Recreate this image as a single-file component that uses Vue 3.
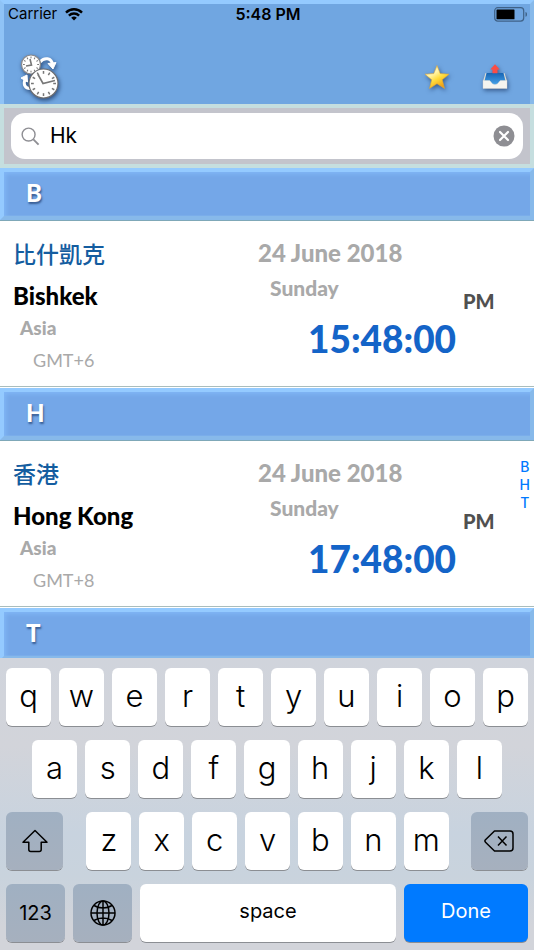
<script setup>
import { ref } from 'vue'

const query = ref('Hk')
const sections = [
  { letter: 'B', cities: [{ native: '比什凱克', name: 'Bishkek', region: 'Asia', zone: 'GMT+6', date: '24 June 2018', day: 'Sunday', time: '15:48:00', half: 'PM' }] },
  { letter: 'H', cities: [{ native: '香港', name: 'Hong Kong', region: 'Asia', zone: 'GMT+8', date: '24 June 2018', day: 'Sunday', time: '17:48:00', half: 'PM' }] },
  { letter: 'T', cities: [] }
]
const keys = ['qwertyuiop', 'asdfghjkl', 'zxcvbnm'].map((row) => row.split(''))
const ticks = Array.from({ length: 12 }, (_, i) => i * 30)

function press(key) {
  query.value += key
}
</script>

<template>
  <div class="app">
    <header class="header">
      <div class="status">
        <div class="carrier">
          <span>Carrier</span>
          <svg class="wifi" viewBox="0 0 18 13" aria-hidden="true">
            <path d="M1 4.6a11.4 11.4 0 0 1 16 0" />
            <path d="M3.9 7.6a7.3 7.3 0 0 1 10.2 0" />
            <path class="dot" d="M9 12.6 6.2 9.8a4 4 0 0 1 5.6 0z" />
          </svg>
        </div>
        <span class="clock">5:48 PM</span>
        <svg class="battery" viewBox="0 0 34 15" aria-hidden="true">
          <rect class="shell" x="0.7" y="0.7" width="29" height="13.4" rx="3" />
          <rect x="2.5" y="2.5" width="18" height="9.8" rx="0.6" />
          <path class="cap" d="M31.5 5c2 .4 2 4.4 0 4.800z" />
        </svg>
      </div>
      <nav class="toolbar">
        <button class="tool" type="button" aria-label="Convert time">
          <svg class="clocks" viewBox="0 0 44 50">
            <path class="curve" d="M20 10c4-5 12-4.500 12.500 3" />
            <path class="tip" d="m28 11.500 8-1-3 6.500z" />
            <path class="curve" d="M11 36.500c-6 .5-8-4-6-9" />
            <path class="tip" d="m1 26 6-3 .5 7z" />
            <circle class="face" cx="11" cy="12.500" r="9.500" />
            <g class="tick"><path v-for="a in ticks" :key="a" d="M11 4.500v1.800" :transform="`rotate(${a} 11 12.5)`" /></g>
            <path class="hand" d="m10 7 1.500 6-5.500 1" />
            <circle class="face large" cx="23.500" cy="31.500" r="14.500" />
            <g class="tick big"><path v-for="a in ticks" :key="a" d="M23.500 19v2.800" :transform="`rotate(${a} 23.5 31.5)`" /></g>
            <path class="hand" d="m18 22.500 5 9 12-3" />
          </svg>
        </button>
        <div class="actions">
          <button class="tool" type="button" aria-label="Favourites">
            <svg class="glyph" viewBox="0 0 26 26">
              <defs>
                <linearGradient id="gold" x1="0" y1="0" x2="0.6" y2="1">
                  <stop offset="0" stop-color="#ffe58a" />
                  <stop offset="0.4" stop-color="#fff6b0" />
                  <stop offset="0.65" stop-color="#ffdc3c" />
                  <stop offset="1" stop-color="#f09c12" />
                </linearGradient>
              </defs>
              <path d="m13 1.500 3.200 8.100 8.800.6-6.700 5.600 2.200 8.600-7.500-4.700-7.500 4.700 2.200-8.600L1 10.200l8.800-.6z" fill="url(#gold)" stroke="#dda637" stroke-width="0.6" stroke-linejoin="round" />
            </svg>
          </button>
          <button class="tool" type="button" aria-label="Export">
            <svg class="glyph" viewBox="0 0 26 26">
              <defs>
                <linearGradient id="tray" x1="0" y1="0" x2="0" y2="1">
                  <stop offset="0" stop-color="#1765b4" />
                  <stop offset="1" stop-color="#48a4ea" />
                </linearGradient>
              </defs>
              <path d="M3.500 9h19l2.500 8v6H1v-6z" fill="#dfddd4" />
              <path d="M4.500 9h17l2 8-5.500 4H8l-5.500-4z" fill="url(#tray)" />
              <path d="M1 16.500h6.500c1.200 0 2 4 5.500 4s4.300-4 5.500-4H25v8H1z" fill="#f5f4ef" stroke="#d8d6ce" stroke-width="0.4" />
              <path d="m13 .2 4.800 5.300h-2.300v3.700h-5V5.500H8.200z" fill="#fa4d45" />
            </svg>
          </button>
        </div>
      </nav>
    </header>

    <form class="search" role="search" @submit.prevent>
      <div class="field">
        <svg class="lens" viewBox="0 0 20 20" aria-hidden="true">
          <circle cx="8" cy="8" r="6.800" />
          <path d="m13 13 5.500 5.500" />
        </svg>
        <input v-model="query" type="text" aria-label="Search cities" />
        <button class="clear" type="button" aria-label="Clear" @click="query = ''">
          <svg viewBox="0 0 22 22">
            <circle cx="11" cy="11" r="10.500" />
            <path d="m7 7 8 8m0-8-8 8" />
          </svg>
        </button>
      </div>
    </form>

    <main class="list">
      <section v-for="s in sections" :key="s.letter" class="section">
        <h2 class="letter">{{ s.letter }}</h2>
        <article v-for="c in s.cities" :key="c.name" class="city">
          <div class="place">
            <p class="native" lang="zh-Hant">{{ c.native }}</p>
            <h3 class="name">{{ c.name }}</h3>
            <p class="region">{{ c.region }}</p>
            <p class="zone">{{ c.zone }}</p>
          </div>
          <div class="moment">
            <p class="date">{{ c.date }}</p>
            <p class="day">{{ c.day }}</p>
            <p class="time">{{ c.time }}</p>
          </div>
          <p class="half">{{ c.half }}</p>
        </article>
      </section>
    </main>

    <nav class="index" aria-label="Sections">
      <a v-for="s in sections" :key="s.letter" href="#">{{ s.letter }}</a>
    </nav>

    <div class="keyboard">
      <div class="row">
        <button v-for="k in keys[0]" :key="k" class="key" type="button" @click="press(k)">{{ k }}</button>
      </div>
      <div class="row middle">
        <button v-for="k in keys[1]" :key="k" class="key" type="button" @click="press(k)">{{ k }}</button>
      </div>
      <div class="row">
        <button class="key dark side" type="button" aria-label="Shift">
          <svg class="shift" viewBox="0 0 28 24"><path d="M14 1.500 2 13.200h5.800v7.300c0 1.200.8 2 2 2h8.400c1.200 0 2-.8 2-2v-7.300H26z" /></svg>
        </button>
        <div class="letters">
          <button v-for="k in keys[2]" :key="k" class="key" type="button" @click="press(k)">{{ k }}</button>
        </div>
        <button class="key dark side" type="button" aria-label="Delete" @click="query = query.slice(0, -1)">
          <svg class="erase" viewBox="0 0 30 22"><path d="M10.500 1H26a3 3 0 0 1 3 3v14a3 3 0 0 1-3 3H10.500L1.500 12.200a1.700 1.700 0 0 1 0-2.400zM14 6.500l8.500 9m0-9-8.500 9" /></svg>
        </button>
      </div>
      <div class="bottom">
        <button class="key dark word side" type="button">123</button>
        <button class="key dark side" type="button" aria-label="Next keyboard">
          <svg class="globe" viewBox="0 0 26 26">
            <circle cx="13" cy="13" r="12" />
            <ellipse cx="13" cy="13" rx="6" ry="12" />
            <path d="M13 1v24M1 13h24M4 5.500c5 3.300 13 3.300 18 0M4 20.500c5-3.300 13-3.300 18 0" />
          </svg>
        </button>
        <button class="key word" type="button" @click="press(' ')">space</button>
        <button class="key word done" type="button">Done</button>
      </div>
    </div>
  </div>
</template>

<style>
body {
  margin: 0;
}
</style>

<style scoped>
.app {
  position: relative;
  display: flex;
  flex-direction: column;
  min-height: 100vh;
  background: #fff;
  font-family: Lato, "Noto Sans CJK TC", sans-serif;
}
.app * {
  box-sizing: border-box;
}
p, h2, h3 {
  margin: 0;
}
button {
  margin: 0;
  padding: 0;
  border: 0;
  background: none;
  color: inherit;
  font: inherit;
}
svg {
  display: block;
}

.header {
  height: 104px;
  border: 4px solid #87b9ea;
  border-top-color: #94caff;
  border-left-color: #8fc3f6;
  border-bottom: 0;
  background: #70a6e1;
}
.status {
  display: grid;
  grid-template-columns: 1fr auto 1fr;
  align-items: center;
  height: 20px;
  padding: 0 2px 0 4px;
  color: #000;
  font: 15px/20px Inter, sans-serif;
}
.carrier {
  display: flex;
  align-items: center;
  gap: 8px;
}
.wifi {
  width: 18px;
  height: 13px;
  fill: none;
  stroke: #000;
  stroke-width: 2.4;
}
.wifi .dot {
  fill: #000;
  stroke: none;
}
.clock {
  font-size: 16px;
  font-weight: 600;
}
.battery {
  justify-self: end;
  width: 34px;
  height: 15px;
}
.shell {
  fill: none;
  stroke: #3f6288;
  stroke-width: 1.2;
}
.cap {
  fill: #3f6288;
}
.toolbar {
  display: flex;
  justify-content: space-between;
  align-items: center;
  padding: 28px 22px 0 16px;
}
.actions {
  display: flex;
  gap: 32px;
}
.clocks {
  width: 44px;
  height: 50px;
  filter: drop-shadow(1px 2px 2px rgba(0, 20, 60, 0.6));
}
.curve {
  fill: none;
  stroke: #fff;
  stroke-width: 3;
}
.tip {
  fill: #fff;
  stroke: #fff;
  stroke-width: 1;
}
.face {
  fill: #fff;
  stroke: #8a8a8c;
  stroke-width: 1.2;
}
.large {
  stroke: #6e6e70;
}
.tick,
.hand {
  fill: none;
  stroke: #777;
  stroke-width: 1;
}
.big {
  stroke-width: 1.5;
}
.hand {
  stroke-width: 1.6;
}
.glyph {
  width: 26px;
  height: 26px;
  filter: drop-shadow(1px 2px 2px rgba(0, 20, 60, 0.5));
}

.search {
  padding: 5px 7px;
  border: 4px solid #c5dedf;
  background: #c3c4cc;
}
.field {
  display: flex;
  align-items: center;
  gap: 10px;
  height: 46px;
  padding: 0 8px 0 10px;
  border-radius: 14px;
  background: #fff;
}
.lens {
  width: 19px;
  height: 19px;
  fill: none;
  stroke: #8e8e93;
  stroke-width: 1.5;
}
.lens path {
  stroke-width: 2;
}
.field input {
  flex: 1;
  min-width: 0;
  padding: 0;
  border: 0;
  outline: 0;
  background: none;
  color: #000;
  font: 21px/28px Inter, sans-serif;
}
.clear svg {
  width: 22px;
  height: 22px;
  fill: #8e8e93;
}
.clear path {
  stroke: #fff;
  stroke-width: 2.2;
  stroke-linecap: round;
}

.list {
  flex: 1;
}
.letter {
  height: 52px;
  padding: 0 22px;
  border: 4px solid #87b9ea;
  border-top-color: #94caff;
  border-left-color: #94caff;
  background: #74a7e8;
  box-shadow: inset 3px 3px 4px -1px #80b6f6, inset 0 -1px 0 #7aaeea, 0 1px 0 #7fa8b8;
  color: #fff;
  font-size: 24px;
  font-weight: 900;
  line-height: 42px;
  text-shadow: 1px 2px 2px rgba(30, 60, 110, 0.7);
}
.city {
  display: grid;
  grid-template-columns: minmax(0, 258fr) minmax(0, 205fr) minmax(0, 71fr);
  height: 167px;
  margin-bottom: 1px;
  padding-top: 16px;
  border-bottom: 1px solid #a9bdbd;
  white-space: nowrap;
}
.place {
  padding-left: 13px;
}
.native {
  color: #145da0;
  font-size: 23px;
  font-weight: 500;
  line-height: 36px;
}
.name {
  color: #000;
  font-size: 24px;
  font-weight: 900;
  line-height: 48px;
}
.region {
  padding-left: 7px;
  color: #a9a9a9;
  font-size: 19px;
  font-weight: 900;
  line-height: 16px;
}
.zone {
  padding-left: 20px;
  color: #a9a9a9;
  font-size: 18px;
  font-weight: 400;
  line-height: 48px;
}
.date {
  color: #a9a9a9;
  font-size: 24px;
  font-weight: 900;
  line-height: 34px;
}
.day {
  padding-left: 12px;
  color: #a9a9a9;
  font-size: 21px;
  font-weight: 900;
  line-height: 36px;
}
.time {
  padding-left: 50px;
  color: #1464c8;
  font-size: 37px;
  font-weight: 900;
  line-height: 66px;
}
.half {
  padding-top: 48px;
  color: #505050;
  font-size: 20px;
  font-weight: 900;
  line-height: 34px;
}

.index {
  position: absolute;
  top: 51%;
  right: 4px;
  display: flex;
  flex-direction: column;
  align-items: center;
  transform: translateY(-50%);
  font: 500 14px/18px Inter, sans-serif;
}
.index a {
  color: #007aff;
  text-decoration: none;
}

.keyboard {
  position: relative;
  display: flex;
  flex-direction: column;
  gap: 14px;
  margin-top: -2px;
  padding: 10px 6px 8px;
  background: linear-gradient(#d0d4dc 0%, #d2d4da 30%, #c8d3df 60%, #c9d3dd 75%, #d2d4da 92%);
  color: #000;
  font-family: Inter, sans-serif;
}
.row,
.letters {
  display: flex;
  gap: 8px;
}
.bottom {
  display: grid;
  grid-template-columns: 59fr 59fr 256fr 124fr;
  gap: 8px;
}
.middle {
  padding: 0 26px;
}
.letters {
  flex: 1;
  padding: 0 14px 0 15px;
}
.key {
  display: flex;
  flex: 1 1 0;
  justify-content: center;
  align-items: center;
  min-width: 0;
  height: 58px;
  padding-bottom: 4px;
  border-radius: 6px;
  background: #fff;
  box-shadow: 0 1px 0 #8b8e93;
  font-size: 31px;
  font-weight: 350;
}
.dark {
  background: linear-gradient(#a0b0c2, #a6b0be);
}
.side {
  flex: 0 0 11%;
  padding-bottom: 0;
}
.word {
  font-size: 20px;
  font-weight: 400;
}
.done {
  background: #007aff;
  color: #fff;
}
.key svg {
  fill: none;
  stroke: #000;
  stroke-width: 1.5;
  stroke-linejoin: round;
}
.shift {
  width: 28px;
  height: 24px;
}
.erase {
  width: 30px;
  height: 22px;
}
.globe {
  width: 26px;
  height: 26px;
}
</style>
